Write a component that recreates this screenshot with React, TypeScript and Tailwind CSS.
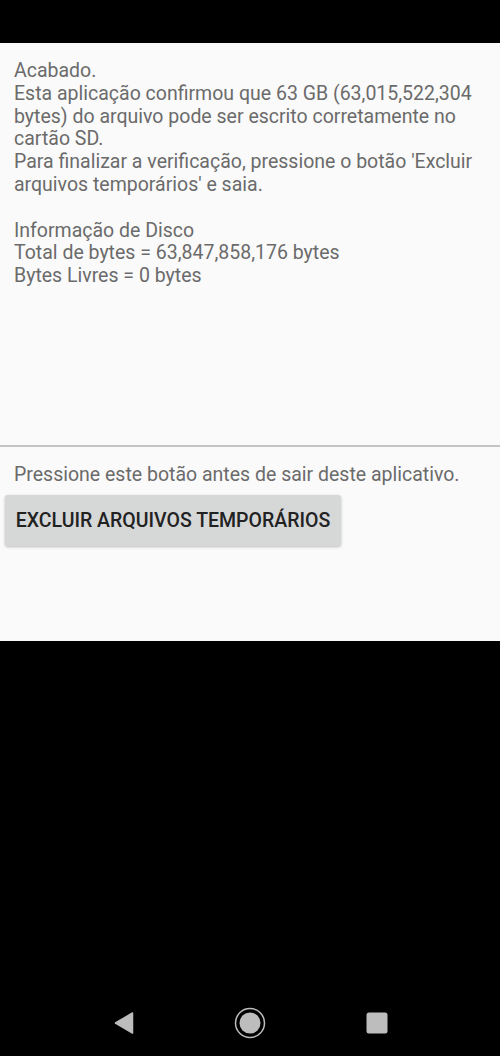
export default function App() {
  return (
    <div className="w-[500px] h-[1056px] bg-black flex flex-col font-['Roboto',sans-serif]">
      <div className="h-[43px] shrink-0" />
      <main className="h-[598px] shrink-0 bg-[#fafafa] flex flex-col">
        <section className="h-[402px] shrink-0 px-[14px] pt-[17px] text-[19.5px] leading-[22.8px] text-[#6b6b6b]">
          <p>Acabado.</p>
          <p>
            Esta aplicação confirmou que 63 GB (63,015,522,304 bytes) do arquivo pode ser escrito corretamente no
            cartão SD.
          </p>
          <p>Para finalizar a verificação, pressione o botão 'Excluir arquivos temporários' e saia.</p>
          <p>&nbsp;</p>
          <p>Informação de Disco</p>
          <p>Total de bytes = 63,847,858,176 bytes</p>
          <p>Bytes Livres = 0 bytes</p>
        </section>
        <div className="h-[2px] bg-[#c4c4c4]" />
        <section className="pt-[16px]">
          <p className="px-[14px] text-[19.5px] leading-[23px] text-[#6b6b6b]">
            Pressione este botão antes de sair deste aplicativo.
          </p>
          <button className="ml-[5px] mt-[9px] w-[336px] h-[51px] rounded-[3px] bg-[#d6d7d7] shadow-[0_1px_3px_rgba(0,0,0,0.25)] text-[19.5px] font-medium text-[#222]">
            EXCLUIR ARQUIVOS TEMPORÁRIOS
          </button>
        </section>
      </main>
      <div className="flex-1 flex flex-col justify-end">
        <nav className="h-[70px] flex items-center justify-center pt-[3px]">
          <div className="w-[275px] flex justify-between items-center">
            <svg width="22" height="24" viewBox="0 0 22 24">
              <path d="M19.5 2 L2.5 12 L19.5 22 Z" fill="#bdbdbd" stroke="#bdbdbd" strokeWidth="1.5" strokeLinejoin="round" />
            </svg>
            <svg width="32" height="32" viewBox="0 0 32 32">
              <circle cx="16" cy="16" r="14.5" fill="none" stroke="#bdbdbd" strokeWidth="1.5" />
              <circle cx="16" cy="16" r="10.5" fill="#bdbdbd" />
            </svg>
            <svg width="22" height="22" viewBox="0 0 22 22">
              <rect x="0.5" y="0.5" width="21" height="21" rx="2.5" fill="#bdbdbd" />
            </svg>
          </div>
        </nav>
      </div>
    </div>
  );
}
